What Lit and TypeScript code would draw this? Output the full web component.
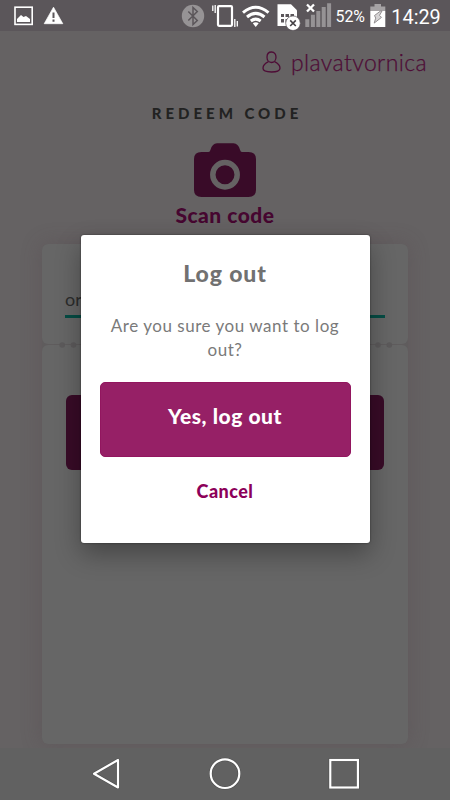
import { LitElement, html, svg, css } from "lit";
import { customElement } from "lit/decorators.js";

@customElement("status-bar")
class StatusBar extends LitElement {
  static styles = css`
    :host { display: block; height: 31px; background: #5b565a; flex: none; }
    svg { display: block; }
    text { font-family: Roboto, sans-serif; fill: #fff; }
  `;
  render() {
    return html`<svg width="450" height="31" viewBox="0 0 450 31">
      <rect x="15" y="7.2" width="17.2" height="17.2" fill="none" stroke="#fff" stroke-width="1.6"/>
      <path d="M17 22v-3l4-4 2.5 2 2.5-1 4 3v3z" fill="#fff"/>
      <path d="M53.5 7.2L62.8 23.7H44.2z" fill="#fff" stroke="#fff" stroke-width=".7" stroke-linejoin="round"/>
      <path d="M53.5 12.5v5.5M53.5 19.5v2.3" stroke="#5b565a" stroke-width="2"/>
      <circle cx="193" cy="16" r="11.2" fill="#969395"/>
      <path d="M188.3 11.5l9 9-4.3 4V7.5l4.3 4-9 9" fill="none" stroke="#5b565a" stroke-width="1.5"/>
      <rect x="218" y="6.2" width="14" height="19.6" rx="1" fill="none" stroke="#fff" stroke-width="2.2"/>
      <path d="M212.8 5.5v5.5M215.2 5v8M234.8 19v8M237.3 21v5.5" stroke="#fff" stroke-width="1.3"/>
      <g fill="none" stroke="#fff" stroke-width="3">
        <path d="M243 12.6Q255.7 2 268.5 12.6"/>
        <path d="M247 17Q255.7 9.7 264.5 17"/>
        <path d="M250.8 21Q255.7 17.2 260.7 21"/>
      </g>
      <path d="M252.8 23.3Q255.7 21.3 258.7 23.3L255.7 27z" fill="#fff"/>
      <path d="M277.5 4.3h13.5l6 6V26h-19.5z" fill="#fff"/>
      <path d="M281 14h3v3h-3zM285.5 14h3.5v3h-3.5zM290.5 14h3.5v3h-3.5zM281 19h3v3.5h-3zM285.5 19h3v3.5h-3z" fill="#5b565a"/>
      <circle cx="293" cy="23.2" r="7.3" fill="#fff" stroke="#5b565a" stroke-width=".7"/>
      <path d="M290.2 20.4l5.6 5.6M295.8 20.4l-5.6 5.6" stroke="#454145" stroke-width="1.6"/>
      <path d="M305.3 19.2h4v7.8h-4zM310.9 14.8h4V27h-4zM316.3 11h4v16h-4zM321.7 7h4v20h-4zM327.1 3.3h4V27h-4z" fill="#969395"/>
      <path d="M307 4.5l7 7M314 4.5l-7 7" stroke="#fff" stroke-width="2.3"/>
      <text x="335.5" y="22" font-size="15.8" textLength="29.5" lengthAdjust="spacingAndGlyphs">52%</text>
      <path d="M374.5 4h6.5v2.5h4.3V11h-15V6.500h4.2z" fill="#a5a2a4"/>
      <path d="M370.3 11h15v16h-15z" fill="#fff"/>
      <path d="M380.500 11l-6 4.500 1.200 2.600-1.500 5 7.300-5.700-2-2 2.500-4.400z" fill="#d6d4d5" stroke="#8a8688" stroke-width=".9"/>
      <text x="391.3" y="23.5" font-size="21" textLength="49.5" lengthAdjust="spacingAndGlyphs">14:29</text>
    </svg>`;
  }
}

@customElement("nav-bar")
class NavBar extends LitElement {
  static styles = css`
    :host { display: block; height: 52px; background: #616161; flex: none; }
    svg { display: block; }
  `;
  render() {
    return html`<svg width="450" height="52" viewBox="0 0 450 52" fill="none">
      <g stroke="#4c4c4c" stroke-width="3.2">
        <path d="M94 25.7L118 12v27.5z" stroke-linejoin="round"/><circle cx="225" cy="25.7" r="14.3"/><rect x="330.3" y="12" width="27.6" height="27.5"/>
      </g>
      <g stroke="#fff" stroke-width="2.2">
        <path d="M94 25.7L118 12v27.5z" stroke-linejoin="round"/><circle cx="225" cy="25.7" r="14.3"/><rect x="330.3" y="12" width="27.6" height="27.5"/>
      </g>
    </svg>`;
  }
}

@customElement("logout-dialog")
class LogoutDialog extends LitElement {
  static styles = css`
    :host {
      display: flex; flex-direction: column; align-items: center; box-sizing: border-box;
      width: 289px; height: 308px; padding: 23px 19px 0; background: #fff; border-radius: 3px;
      box-shadow: 0 0 2px rgba(0,0,0,.5), 0 11px 26px rgba(0,0,0,.32);
      font-family: Lato, sans-serif; text-align: center;
    }
    .title { font-size: 23px; line-height: 30px; font-weight: 900; color: #717171; letter-spacing: .9px; }
    .message { margin-top: 26px; height: 48px; font-size: 17px; line-height: 24px; color: #7a7a7a; letter-spacing: .53px; white-space: nowrap; }
    .confirm {
      margin-top: 20px; width: 251px; height: 75px; box-sizing: border-box; padding: 0 0 9px;
      display: flex; align-items: center; justify-content: center; flex: none;
      border: 1px solid #92165f; border-radius: 5px; background: #962066; color: #fff;
      font: 900 21px Lato, sans-serif; letter-spacing: .55px;
    }
    .cancel { margin-top: 21px; border: 0; padding: 0; background: none; color: #8c0059; font: 900 18px/26px Lato, sans-serif; letter-spacing: .45px; }
  `;
  render() {
    return html`
      <div class="title">Log out</div>
      <div class="message">Are you sure you want to log<br />out?</div>
      <button class="confirm">Yes, log out</button>
      <button class="cancel">Cancel</button>`;
  }
}

@customElement("app-root")
class AppRoot extends LitElement {
  static styles = css`
    :host { display: flex; flex-direction: column; position: relative; width: 450px; height: 800px; overflow: hidden; background: #656263; font-family: Lato, sans-serif; }
    svg { display: block; }
    .page { flex: 1; min-height: 0; overflow: hidden; display: flex; flex-direction: column; align-items: center; }
    .user { align-self: flex-end; display: flex; align-items: center; gap: 10px; height: 32px; margin: 15px 23px 0 0; color: #4e0c36; font-size: 23px; font-weight: 300; letter-spacing: .4px; -webkit-text-stroke: .25px #4e0c36; }
    .user svg { margin-top: -1px; }
    .heading { margin-top: 25px; height: 20px; line-height: 20px; font-size: 15px; font-weight: 900; letter-spacing: 4px; padding-left: 4px; color: #222; }
    .camera { margin-top: 20px; }
    .scan { margin-top: 4px; height: 28px; line-height: 28px; font-size: 21px; font-weight: 900; letter-spacing: .5px; color: #460630; }
    .cards { position: relative; margin-top: 15px; width: 366px; display: flex; flex-direction: column; gap: 1px; border-radius: 6px; box-shadow: 0 0 20px 1px rgba(83,67,72,.3); background: #5f5c5d; flex: none; }
    .card { box-sizing: border-box; padding: 0 23px; border-radius: 6px; background: #666; }
    .top { height: 100px; padding-top: 42px; }
    .field { height: 29px; border-bottom: 3px solid #064c44; color: #2c2c2c; font-size: 18px; line-height: 27px; }
    .bottom { height: 399px; padding: 50px 24px 0; }
    .redeem { height: 75px; border-radius: 6px; background: #380b27; }
    .perforation { position: absolute; left: 0; top: 97.5px; }
    .modal { position: absolute; left: 80.5px; top: 235px; }
  `;
  render() {
    const dots = Array.from({ length: 30 }, (_, i) => 20.2 + i * 11.28);
    return html`
      <status-bar></status-bar>
      <main class="page">
        <div class="user">
          <svg width="19" height="22" viewBox="0 0 19 22" fill="none" stroke="#4e0c36" stroke-width="1.3">
            <path d="M9.5 1C6.3 1 5 3.3 5 6.2S6.8 11.5 9.5 11.5 14 9 14 6.2 12.7 1 9.5 1z"/>
            <path d="M6.5 10.7C3 12.3 1 14 1 17.3 1 20 4 21 9.5 21S18 20 18 17.3C18 14 16 12.3 12.5 10.7"/>
          </svg>
          <span>plavatvornica</span>
        </div>
        <div class="heading">REDEEM CODE</div>
        <svg class="camera" width="62" height="54" viewBox="0 0 62 54">
          <path fill="#390b28" d="M7.5 9H14.5Q16 9 16.5 6.8Q18.3 .3 23 .3H39.5Q44.2 .3 46 6.8Q46.5 9 48 9H54.5Q62 9 62 16V47Q62 54 54.5 54H7.5Q0 54 0 47V16Q0 9 7.5 9z"/>
          <circle cx="31" cy="31.7" r="12.2" fill="none" stroke="#656263" stroke-width="5.5"/>
        </svg>
        <div class="scan">Scan code</div>
        <section class="cards">
          <div class="card top"><div class="field">oranges</div></div>
          <div class="card bottom"><div class="redeem"></div></div>
          <svg class="perforation" width="366" height="6" viewBox="0 0 366 6" fill="#5c5a5b">
            ${dots.map((x) => svg`<circle cx=${x} cy="3" r="2.8"/>`)}
          </svg>
        </section>
      </main>
      <nav-bar></nav-bar>
      <logout-dialog class="modal"></logout-dialog>`;
  }
}
